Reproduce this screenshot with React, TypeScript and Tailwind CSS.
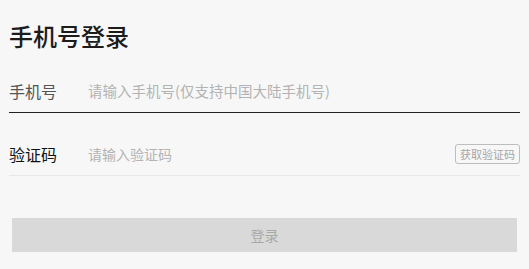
export default function App() {
  const font = { fontFamily: '"Noto Sans CJK SC", "Noto Sans", sans-serif' };
  return (
    <div className="w-[529px] h-[269px] bg-[#f7f7f7] overflow-hidden" style={font}>
      <div className="px-[9px]">
        <div className="pt-[20px] text-[24px] leading-[32px] font-medium text-[#1c1c1c]">手机号登录</div>
        <div className="flex items-center pt-[29px] pb-[11px] border-b border-[#222]">
          <span className="w-[79px] text-[16px] leading-[20px] text-[#555]">手机号</span>
          <span className="text-[14.5px] leading-[20px] text-[#b3b3b3]">请输入手机号(仅支持中国大陆手机号)</span>
        </div>
        <div className="flex items-center pt-[31px] pb-[11px] border-b border-[#e8e8e8]">
          <span className="w-[79px] text-[16px] leading-[20px] text-[#111]">验证码</span>
          <span className="flex-1 text-[14px] leading-[20px] text-[#b3b3b3]">请输入验证码</span>
          <span className="h-[20px] w-[65px] flex items-center justify-center border border-[#bdbdbd] rounded-[3px] text-[11px] text-[#a6a6a6]">获取验证码</span>
        </div>
        <div className="mt-[42px] mx-[3px] h-[34px] bg-[#d9d9d9] flex items-center justify-center text-[14px] text-[#a8a8a8]">登录</div>
      </div>
    </div>
  );
}
